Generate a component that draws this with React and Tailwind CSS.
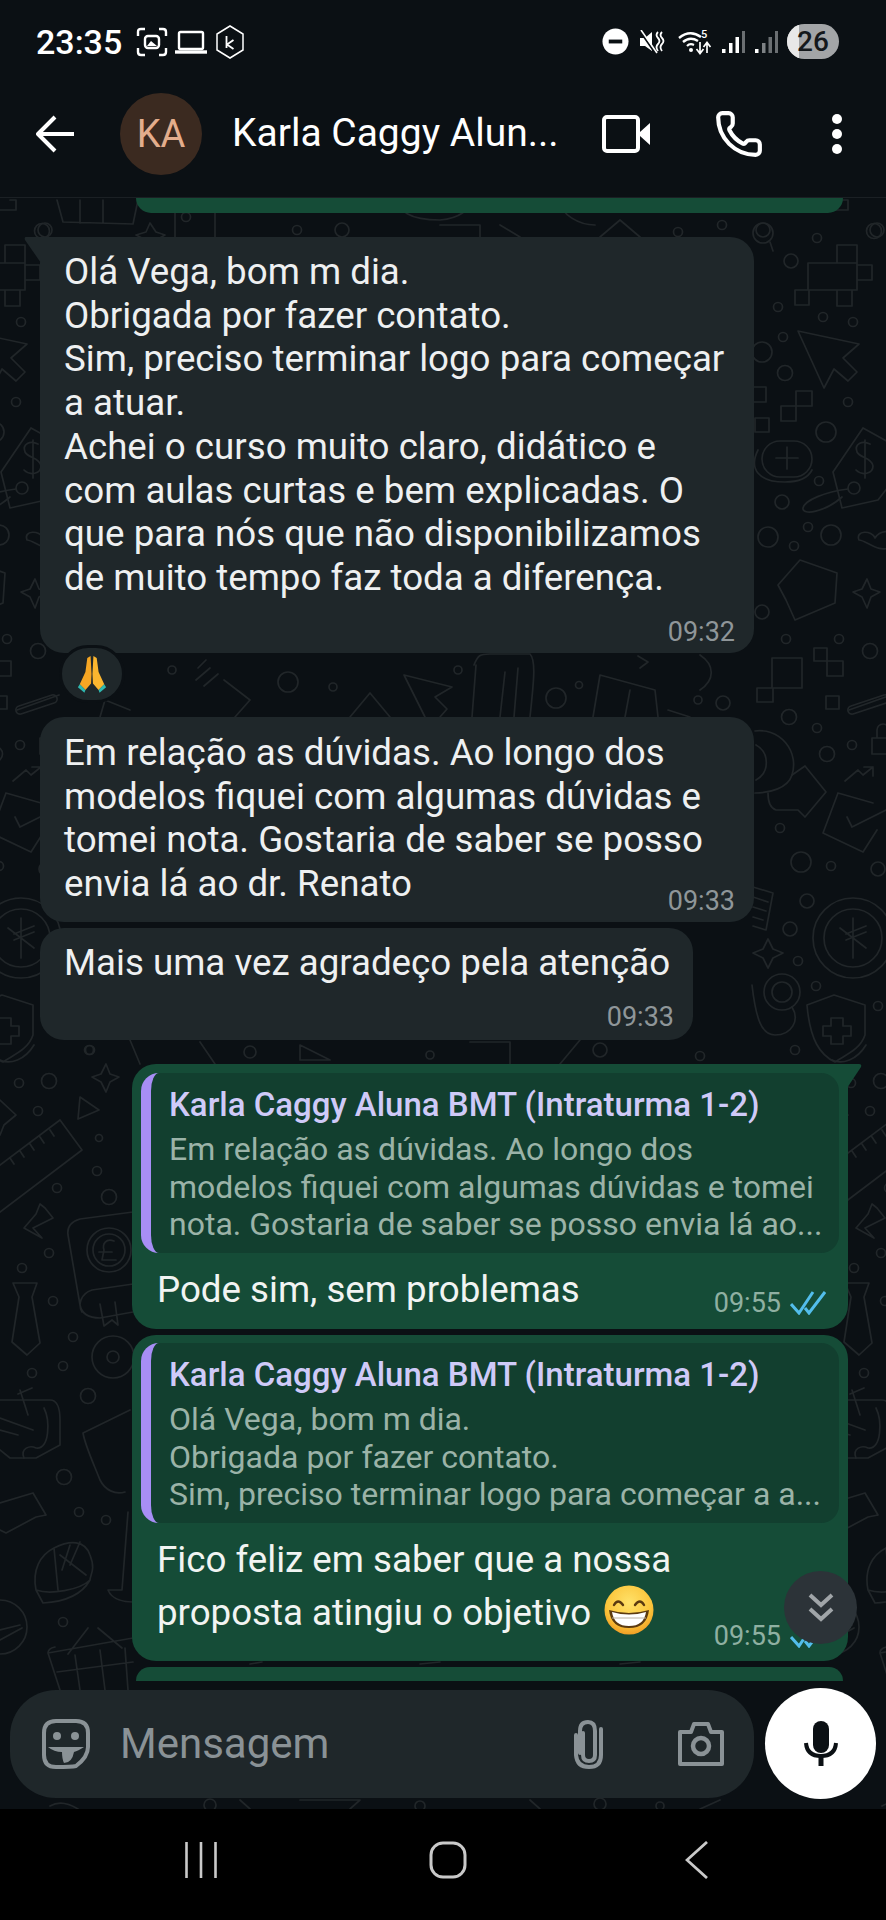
import { Phone } from "lucide-react";

// wallpaper doodles, page coordinates
const circles = [
  [763,233,10],[791,261,7],[817,238,4.5],[874,231,7.5],[778,307,4.5],[823,317,4.5],[853,322,4.5],[783,337,4.5],
  [762,352,10],[785,373,7.5],[848,402,4.5],[826,432,10],[854,488,6],[819,481,4.5],[782,502,7],[768,537,10],
  [808,527,4.5],[831,535,10],[794,546,4.5],[762,612,7],[786,639,4.5],[839,639,4.5],[870,651,7.5],[789,717,7.5],
  [817,728,4.5],[852,745,4.5],[827,754,7.5],[780,828,4.5],[801,862,10],[831,866,4.5],[878,869,7],[807,901,7],
  [790,929,7],[798,961,4.5],[816,986,4.5],[878,1006,4.5],[795,1050,4.5],[853,938,40],[853,938,29],[782,992,18],[782,992,10],
  [19,1083,4.5],[49,1081,7.5],[89,1050,4.5],[38,1111,4.5],[99,1138,3.5],[97,1171,4.5],[109,1197,7.5],[57,1188,4.5],
  [109,1250,22],[109,1250,16],[49,1253,4.5],[22,1268,4.5],[53,1301,4.5],[73,1337,4.5],[63,1366,4.5],[113,1357,21],[113,1357,6],
  [32,1373,4.5],[88,1396,7.5],[64,1477,7.5],[79,1512,4.5],[106,1520,4.5],[63,1622,4.5],[0,1627,27],
  [45,230,7],[186,217,4.5],[342,230,7],[297,230,4.5],[678,232,4.5],[722,225,4.5],[763,230,7],[172,670,4],[288,682,10],
  [333,687,4],[458,670,4],[556,698,10],[579,685,3.5],[698,700,4],[723,703,7],[90,1050,4.5],[250,1052,6],[430,1055,4],
  [600,1050,7],[700,1056,4.5],[210,1805,6],[420,1806,5],[600,1804,6],[660,1806,4],
];

const strokes = [
  "M770 242L773 251",
  "M837 263V245H857V290H808V263H857M857 265H872V280H857M795 290H809V305H795ZM837 290H852V306H837Z",
  "M798 331L859 344L843 358L857 372L848 381L834 369L824 388Z",
  "M796 391H812V406H796ZM781 406H796V421H781ZM753 387H766V402H753ZM755 418H769V432H755Z",
  "M780 441H794A18 18 0 0 1 794 477H780A18 18 0 0 1 780 441ZM787 447V469M776 458H798M758 450C748 470 760 482 785 482C800 482 808 478 812 470",
  "M863 428L833 472L842 508L878 500L892 482M863 428L892 444",
  "M870 444C862 440 854 444 857 452C860 458 872 458 873 466C873 474 862 476 856 470M865 440V478",
  "M848 489C825 492 805 500 803 508C802 516 825 512 842 497",
  "M891 546C880 555 866 540 859 540C855 530 872 530 875 538C880 530 892 530 892 535",
  "M778 585L800 560L837 573L835 603L795 620M778 585L786 600L795 620",
  "M867 579L871 589L880 592L871 597L867 608L862 597L853 592L862 589Z",
  "M772 658H802V688H772ZM757 688H773V702H757ZM814 648H827V661H814ZM827 661H843V676H827ZM826 696H839V709H826Z",
  "M851 706L884 695A4 4 0 0 1 886 703L853 714A4 4 0 0 1 851 706Z",
  "M872 738H890V754H872ZM877 738V730A6 6 0 0 1 889 730V738",
  "M845 781L858 770L863 775L873 767M864 767H873V776",
  "M755 731A34 34 0 0 1 792 775C788 788 770 793 755 793M756 745A20 20 0 0 1 756 780",
  "M792 775L805 766L826 792L805 817L798 810H776C770 808 768 800 768 793",
  "M838 793L873 803M838 793L823 833L863 852L877 830M847 817L852 827L886 810",
  "M753 887L773 893L766 930L753 926M753 897L768 902M753 907L766 911M753 917L763 920",
  "M853 918V958M840 928L866 948M846 934L866 926M846 940L866 932",
  "M768 939L773 949L783 953L773 958L768 968L763 958L753 953L763 949Z",
  "M792 1007C800 1020 792 1035 775 1035C762 1035 756 1020 752 985",
  "M807 1005L834 995L865 1005V1035C860 1050 845 1055 835 1062C820 1055 810 1040 807 1005Z",
  "M831 1018H843V1026H851V1036H843V1044H831V1036H823V1026H831Z",
  "M0 1060C10 1065 25 1060 34 1045",
  "M106 1064L110 1074L119 1077L110 1082L106 1092L101 1082L92 1077L101 1074Z",
  "M80 1097L99 1110L78 1119Z",
  "M0 1100L16 1115L4 1125L0 1135",
  "M60 1120L82 1150L0 1212M60 1120L0 1165M10 1158L14 1164M20 1151L24 1157M30 1144L34 1150M40 1137L44 1143M50 1130L54 1136",
  "M33 1228L53 1218L45 1208L40 1204L36 1214L24 1228L42 1238Z",
  "M133 1212L80 1219C70 1222 67 1228 68 1235L80 1305C82 1315 90 1318 100 1318L133 1312M133 1284L92 1290C80 1294 78 1305 82 1312M100 1304L104 1326L112 1320L118 1325L115 1302",
  "M114 1241C106 1238 102 1244 104 1250L102 1260H116M99 1252H112",
  "M13 1283H37L32 1297L40 1343L27 1355L12 1342L19 1297Z",
  "M0 1400H50C58 1400 60 1410 60 1420V1445L36 1458H10L0 1450M20 1390L28 1415M32 1388L18 1394M0 1418L33 1430M0 1430L18 1435",
  "M24 1458C20 1448 30 1445 36 1448C50 1450 50 1420 44 1408",
  "M0 1503L33 1493L46 1515L36 1517L6 1533L0 1530M33 1493L46 1515",
  "M43 1603L36 1590C32 1570 40 1555 54 1548C70 1540 85 1540 90 1555C96 1570 90 1575 90 1580C80 1598 60 1602 43 1603ZM54 1548L58 1590M36 1590C50 1595 80 1590 90 1580M60 1555L86 1575M70 1545L62 1570M80 1542L70 1565",
  "M0 1640L22 1628M0 1630L20 1625",
  "M48 1653L133 1638M48 1653L60 1690M48 1653C48 1650 50 1648 55 1647M75 1655L80 1690M100 1650L105 1690M125 1648L128 1690M57 1672L133 1662M68 1654L88 1628M98 1628L122 1648",
  "M83 1433L130 1410M83 1433C85 1445 92 1460 100 1480C105 1490 115 1495 125 1492",
  "M128 1512L122 1590L108 1590C112 1600 125 1602 133 1602",
  "M57 200L63 222L133 224L138 200M80 200V223M103 200V223",
  "M10 200H16V210H0M150 223L156 232L165 235L156 240L150 248L146 240L136 235L146 232Z",
  "M175 205H215V240H175Z M400 200C398 210 408 220 440 220C460 218 470 210 470 200",
  "M560 200C560 215 580 225 595 225M440 225H480V237M500 225L520 237M600 237L620 220L640 237",
  "M17 710L59 695M100 717L105 700L130 710",
  "M198 668L206 660M196 680L210 668M204 686L218 674",
  "M224 680L250 700L235 717M350 717L370 693L390 717",
  "M404 675L452 687L435 697L447 709L440 717M404 675L425 717",
  "M474 665C478 655 480 654 490 654H530C536 660 534 680 530 717M476 665L472 717M505 672L500 717M518 668L514 717",
  "M593 717L600 675L655 690L658 717M630 690L625 717",
  "M638 656L648 662L640 668M668 710L690 717M700 655C715 665 715 680 700 690",
  "M130 1040L140 1064M200 1042L215 1064M300 1045L330 1060H300ZM470 1042H510V1064M560 1064L580 1040",
  "M250 1664L262 1662M420 1664L440 1662M620 1664L640 1662",
  "M50 1806C60 1800 70 1804 78 1809M240 1800L250 1809M300 1800L360 1800L350 1809M530 1800L540 1809M720 1800L700 1809",
];

function Wallpaper() {
  return (
    <svg className="absolute inset-0" width="886" height="1611" viewBox="0 198 886 1611" fill="none" stroke="#212629" strokeWidth="1.7" strokeLinejoin="round" strokeLinecap="round">
      <g id="wp">
        {circles.map(([cx, cy, r], i) => <circle key={i} cx={cx} cy={cy} r={r} />)}
        {strokes.map((d, i) => <path key={i} d={d} />)}
      </g>
      <use href="#wp" x="-832" />
      <use href="#wp" x="832" />
    </svg>
  );
}

function StatusBar() {
  return (
    <div className="h-[70px] flex items-center pt-[13px] pl-[36px] text-white">
      <span className="text-[34px] font-medium w-[98px] leading-none">23:35</span>
      <svg width="32" height="30" viewBox="0 0 32 30" fill="none" stroke="white" strokeWidth="2.4" className="ml-[2px]">
        <path d="M2 9V5Q2 2 5 2H9M23 2H27Q30 2 30 5V9M2 21V25Q2 28 5 28H9M23 28H27Q30 28 30 25V21" />
        <rect x="9" y="9" width="14" height="12" rx="3" />
        <path d="M11 19L15 14L21 19Z" fill="white" stroke="none" />
      </svg>
      <svg width="34" height="24" viewBox="0 0 34 24" fill="none" stroke="white" strokeWidth="2.4" className="ml-[6px]">
        <rect x="5" y="2" width="24" height="17" rx="1.5" />
        <path d="M1 22H33" strokeWidth="3.4" />
      </svg>
      <svg width="30" height="34" viewBox="0 0 30 34" fill="none" stroke="white" strokeWidth="1.5" className="ml-[7px]">
        <path d="M15 1L28 9V25L15 33L2 25V9Z" />
        <path d="M11.5 11V23M18.5 15L12 19.5L18.5 24" strokeWidth="1.8" />
      </svg>
      <div className="flex-1" />
      <svg width="27" height="27" viewBox="0 0 28 28">
        <circle cx="14" cy="14" r="13.5" fill="white" />
        <rect x="7" y="12" width="14" height="4" fill="#0b1014" />
      </svg>
      <svg width="26" height="24" viewBox="0 0 26 24" fill="white" className="ml-[11px]">
        <path d="M0 8H5L12 2V21L5 16H0Z" />
        <path d="M0 1L15 23" stroke="#0b1014" strokeWidth="2" />
        <path d="M1 0L17 23" stroke="white" strokeWidth="1.6" />
        <path d="M18 2Q15 5 18 8Q21 11 18 14Q15 17 18 21M22 2Q19 5 22 8Q25 11 22 14Q19 17 22 21" fill="none" stroke="white" strokeWidth="1.8" />
      </svg>
      <svg width="34" height="26" viewBox="0 0 34 26" fill="none" stroke="white" className="ml-[12px]">
        <path d="M1 9Q12 0 23 8" strokeWidth="2.4" />
        <path d="M5 13Q12 7 20 12" strokeWidth="2.4" />
        <path d="M9 17Q12 14 16 16" strokeWidth="2.2" />
        <circle cx="13" cy="21" r="2" fill="white" stroke="none" />
        <text x="23" y="9" fill="white" stroke="none" fontSize="11" fontFamily="Roboto, sans-serif" fontWeight="500">5</text>
        <path d="M22 13V24M18.5 20L22 24.5L25.5 20M29 24V14M25.5 18L29 13.5L32.5 18" strokeWidth="1.7" />
      </svg>
      <svg width="24" height="24" viewBox="0 0 24 24" className="ml-[10px]">
        <rect x="0" y="19" width="3.5" height="4" fill="white" />
        <rect x="7" y="13" width="3.5" height="10" fill="white" />
        <rect x="13.5" y="7" width="3.5" height="16" fill="white" />
        <rect x="20" y="1" width="3" height="22" fill="#6b6f72" />
      </svg>
      <svg width="24" height="24" viewBox="0 0 24 24" className="ml-[9px]">
        <rect x="0" y="19" width="3.5" height="4" fill="white" />
        <rect x="7" y="13" width="3.5" height="10" fill="#7d8184" />
        <rect x="13.5" y="7" width="3.5" height="16" fill="#6b6f72" />
        <rect x="20" y="1" width="3" height="22" fill="#6b6f72" />
      </svg>
      <div className="relative ml-[8px] mr-[47px] w-[52px] h-[35px] rounded-full bg-[#a3a5a7] overflow-hidden flex items-center justify-center">
        <div className="absolute left-0 top-0 bottom-0 w-[12px] bg-[#e8e8e8]" />
        <span className="relative text-[28px] font-medium text-[#14181b] leading-none">26</span>
      </div>
    </div>
  );
}

function Header() {
  return (
    <div className="h-[128px] flex items-center text-white border-b border-[#1b2024]">
      <svg width="40" height="38" viewBox="0 0 40 38" fill="none" stroke="white" strokeWidth="4" className="ml-[36px]">
        <path d="M38 19H3M19 2L2 19L19 36" strokeLinejoin="round" />
      </svg>
      <div className="ml-[44px] w-[82px] h-[82px] rounded-full bg-[#3b2a20] flex items-center justify-center">
        <span className="text-[38px] text-[#e3ad8c] leading-none">KA</span>
      </div>
      <span className="ml-[30px] w-[370px] text-[39px] leading-none whitespace-nowrap">Karla Caggy Alun...</span>
      <svg width="50" height="38" viewBox="0 0 50 38" fill="none">
        <rect x="2" y="2" width="34" height="34" rx="3" stroke="white" strokeWidth="4" />
        <path d="M38 17L48 8V30L38 21Z" fill="white" />
      </svg>
      <Phone size={50} color="white" strokeWidth={2} className="ml-[62px]" />
      <svg width="12" height="42" viewBox="0 0 12 42" className="ml-[67px]">
        <circle cx="6" cy="6" r="5" fill="white" />
        <circle cx="6" cy="21" r="5" fill="white" />
        <circle cx="6" cy="36" r="5" fill="white" />
      </svg>
    </div>
  );
}

function PrayEmoji() {
  return (
    <svg width="32" height="40" viewBox="0 0 34 40">
      <path d="M15.5 1L12 3L10 18L4 31L10 37L16 30L16.5 20Z" fill="#f6a623" />
      <path d="M18.5 1L22 3L24 18L30 31L24 37L18 30L17.5 20Z" fill="#fbb62f" />
      <path d="M4 31L10 37L9 40L2 34Z" fill="#2fb8b0" />
      <path d="M30 31L24 37L25 40L32 34Z" fill="#2fb8b0" />
    </svg>
  );
}

function GrinEmoji() {
  return (
    <svg width="50" height="50" viewBox="0 0 50 50" className="inline-block align-[-10px] ml-[13px]">
      <defs>
        <radialGradient id="face" cx="50%" cy="35%" r="70%">
          <stop offset="0%" stopColor="#ffe26a" />
          <stop offset="65%" stopColor="#fbc53b" />
          <stop offset="100%" stopColor="#ee9520" />
        </radialGradient>
      </defs>
      <circle cx="25" cy="25" r="24.5" fill="url(#face)" />
      <path d="M10 20Q14 13 19 20M31 20Q36 13 40 20" fill="none" stroke="#5b3a10" strokeWidth="2.4" strokeLinecap="round" />
      <path d="M5 25Q25 31 45 25Q43 43 25 43Q7 43 5 25Z" fill="#5b3a10" />
      <path d="M8 27Q25 32 42 27Q40 41 25 41Q10 41 8 27Z" fill="white" />
      <path d="M8 33H42" stroke="#b9b0a0" strokeWidth="1.2" />
    </svg>
  );
}

function Ticks() {
  return (
    <svg width="36" height="24" viewBox="0 0 36 24" fill="none" stroke="#53bdeb" strokeWidth="3" className="ml-[9px]">
      <path d="M1 13L9 22L23 1" />
      <path d="M15 17L19 22L35 1" />
    </svg>
  );
}

function InBubble({ lines, time, tail, className, timeClass }) {
  return (
    <div className={`relative ml-[40px] bg-[#1f272a] rounded-[24px] pl-[24px] pr-[19px] ${tail ? "rounded-tl-none" : ""} ${className}`}>
      {tail && (
        <svg width="17" height="26" viewBox="0 0 17 26" className="absolute left-[-16px] top-0">
          <path d="M2 0H17V26L1 3Q0 0 2 0Z" fill="#1f272a" />
        </svg>
      )}
      <div className="text-[36.7px] leading-[43.7px] text-[#eef0f1] whitespace-nowrap">
        {lines.map((l) => <div key={l}>{l}</div>)}
      </div>
      <div className={`flex justify-end text-[27px] leading-[30px] text-[#8f9699] ${timeClass}`}>{time}</div>
    </div>
  );
}

function Quote({ lines }) {
  return (
    <div className="relative mx-[9px] bg-[#123f2f] rounded-[18px] overflow-hidden pl-[18px] pt-[14px] pb-[9px] border-l-[10px] border-[#a78ef5] whitespace-nowrap">
      <div className="text-[33px] leading-[36px] font-medium text-[#cfcaf8]">Karla Caggy Aluna BMT (Intraturma 1-2)</div>
      <div className="mt-[8px] text-[32px] leading-[37.5px] text-[#9bb3a8]">
        {lines.map((l) => <div key={l}>{l}</div>)}
      </div>
    </div>
  );
}

function InputBar() {
  return (
    <div className="relative flex items-center gap-[11px] pl-[10px] mt-[7px] mb-[10px]">
      <div className="w-[744px] h-[108px] rounded-[46px] bg-[#1f272a] flex items-center pl-[32px] pr-[29px]">
        <svg width="48" height="50" viewBox="0 0 48 50" fill="none" stroke="#8a9296" strokeWidth="4">
          <path d="M14 2H34Q46 2 46 14V28Q46 38 34 47Q30 48 14 48Q2 48 2 36V14Q2 2 14 2Z" />
          <circle cx="15" cy="17" r="4" fill="#8a9296" stroke="none" />
          <circle cx="33" cy="17" r="4" fill="#8a9296" stroke="none" />
          <path d="M6 28H42Q36 32 32 33Q30 44 22 44Q20 40 20 33Q12 33 6 28Z" fill="#8a9296" stroke="none" />
        </svg>
        <span className="ml-[30px] flex-1 text-[42px] leading-none text-[#8a9296]">Mensagem</span>
        <svg width="32" height="50" viewBox="0 0 32 50" fill="none" stroke="#8a9296" strokeWidth="4" strokeLinecap="round">
          <path d="M10 14V36Q10 42 16 42Q22 42 22 36V12Q22 3 15 3Q7 3 7 12V34M28 10V36Q28 48 16 48Q4 48 3 36V16" />
        </svg>
        <svg width="48" height="46" viewBox="0 0 48 46" fill="none" stroke="#8a9296" strokeWidth="4" className="ml-[72px]">
          <path d="M3 11H14L17 3H31L34 11H45V43H3Z" strokeLinejoin="round" />
          <circle cx="24" cy="25" r="8" strokeWidth="4.5" />
        </svg>
      </div>
      <div className="w-[111px] h-[111px] rounded-full bg-white flex items-center justify-center">
        <svg width="34" height="46" viewBox="0 0 34 46" fill="#0b1014">
          <rect x="9" y="0" width="16" height="32" rx="8" />
          <path d="M2 22Q3 35 17 35Q31 35 32 22" fill="none" stroke="#0b1014" strokeWidth="4" />
          <rect x="14.5" y="34" width="5" height="11" />
        </svg>
      </div>
    </div>
  );
}

function NavBar() {
  return (
    <div className="h-[111px] bg-black flex items-center pb-[10px]">
      <svg width="32" height="36" viewBox="0 0 32 36" stroke="#c9c9c9" strokeWidth="2.6" className="ml-[185px]">
        <path d="M1.5 0V36M16 0V36M30.5 0V36" />
      </svg>
      <svg width="38" height="38" viewBox="0 0 38 38" fill="none" stroke="#c9c9c9" strokeWidth="3" className="ml-[212px]">
        <rect x="2" y="2" width="34" height="34" rx="12" />
      </svg>
      <svg width="24" height="38" viewBox="0 0 24 38" fill="none" stroke="#c9c9c9" strokeWidth="2.8" className="ml-[218px]">
        <path d="M22 1L2 19L22 37" />
      </svg>
    </div>
  );
}

export default function App() {
  return (
    <div className="w-[886px] h-[1920px] flex flex-col bg-[#0b1014] overflow-hidden" style={{ fontFamily: "Roboto, 'Noto Sans', sans-serif" }}>
      <StatusBar />
      <Header />
      <div className="relative flex-1 flex flex-col overflow-hidden">
        <Wallpaper />
        <div className="relative flex-1">
          <div className="ml-[136px] w-[707px] h-[15px] bg-[#154c37] rounded-b-[18px]" />

          <InBubble
            tail
            className="mt-[24px] w-[714px] h-[416px] pt-[13px]"
            timeClass="mt-[17px]"
            time="09:32"
            lines={[
              "Olá Vega, bom m dia.",
              "Obrigada por fazer contato.",
              "Sim, preciso terminar logo para começar",
              "a atuar.",
              "Achei o curso muito claro, didático e",
              "com aulas curtas e bem explicadas. O",
              "que para nós que não disponibilizamos",
              "de muito tempo faz toda a diferença.",
            ]}
          />

          <div className="relative ml-[59px] -mt-[8px] w-[66px] h-[58px] rounded-full bg-[#1f272a] border-[3px] border-[#0b1014] flex items-center justify-center">
            <PrayEmoji />
          </div>

          <InBubble
            className="mt-[14px] w-[714px] h-[205px] pt-[14px]"
            timeClass="-mt-[20px]"
            time="09:33"
            lines={[
              "Em relação as dúvidas. Ao longo dos",
              "modelos fiquei com algumas dúvidas e",
              "tomei nota. Gostaria de saber se posso",
              "envia lá ao dr. Renato",
            ]}
          />

          <InBubble
            className="mt-[6px] w-[653px] h-[112px] pt-[13px]"
            timeClass="mt-[17px]"
            time="09:33"
            lines={["Mais uma vez agradeço pela atenção"]}
          />

          <div className="relative mt-[24px] ml-[132px] w-[716px] h-[265px] pt-[9px] bg-[#154c37] rounded-[24px] rounded-tr-none">
            <svg width="15" height="24" viewBox="0 0 15 24" className="absolute right-[-14px] top-0">
              <path d="M0 0H12Q15 0 14 3L0 24Z" fill="#154c37" />
            </svg>
            <Quote
              lines={[
                "Em relação as dúvidas. Ao longo dos",
                "modelos fiquei com algumas dúvidas e tomei",
                "nota. Gostaria de saber se posso envia lá ao...",
              ]}
            />
            <div className="flex items-start justify-between mt-[15px] pl-[25px] pr-[22px]">
              <span className="text-[36.7px] leading-[44px] text-[#f1f4f2]">Pode sim, sem problemas</span>
              <div className="flex items-center mt-[20px] text-[27px] leading-[30px] text-[#8fb0a2]">
                09:55
                <Ticks />
              </div>
            </div>
          </div>

          <div className="relative mt-[6px] ml-[132px] w-[716px] h-[326px] pt-[8px] bg-[#154c37] rounded-[24px]">
            <Quote
              lines={[
                "Olá Vega, bom m dia.",
                "Obrigada por fazer contato.",
                "Sim, preciso terminar logo para começar a a...",
              ]}
            />
            <div className="mt-[11px] pl-[25px] text-[36.7px] leading-[51px] text-[#f1f4f2] whitespace-nowrap">
              <div>Fico feliz em saber que a nossa</div>
              <div>
                proposta atingiu o objetivo
                <GrinEmoji />
              </div>
            </div>
            <div className="flex items-center justify-end -mt-[17px] pr-[22px] text-[27px] leading-[30px] text-[#8fb0a2]">
              09:55
              <Ticks />
            </div>
            <div className="absolute right-[-9px] top-[236px] w-[73px] h-[73px] rounded-full bg-[#2c3338] flex items-center justify-center">
              <svg width="28" height="30" viewBox="0 0 28 30" fill="none" stroke="#a0a5a8" strokeWidth="4">
                <path d="M3 2L14 12L25 2M3 16L14 26L25 16" />
              </svg>
            </div>
          </div>

          <div className="mt-[6px] ml-[136px] w-[707px] h-[14px] bg-[#154c37] rounded-t-[18px]" />
        </div>
        <InputBar />
      </div>
      <NavBar />
    </div>
  );
}
